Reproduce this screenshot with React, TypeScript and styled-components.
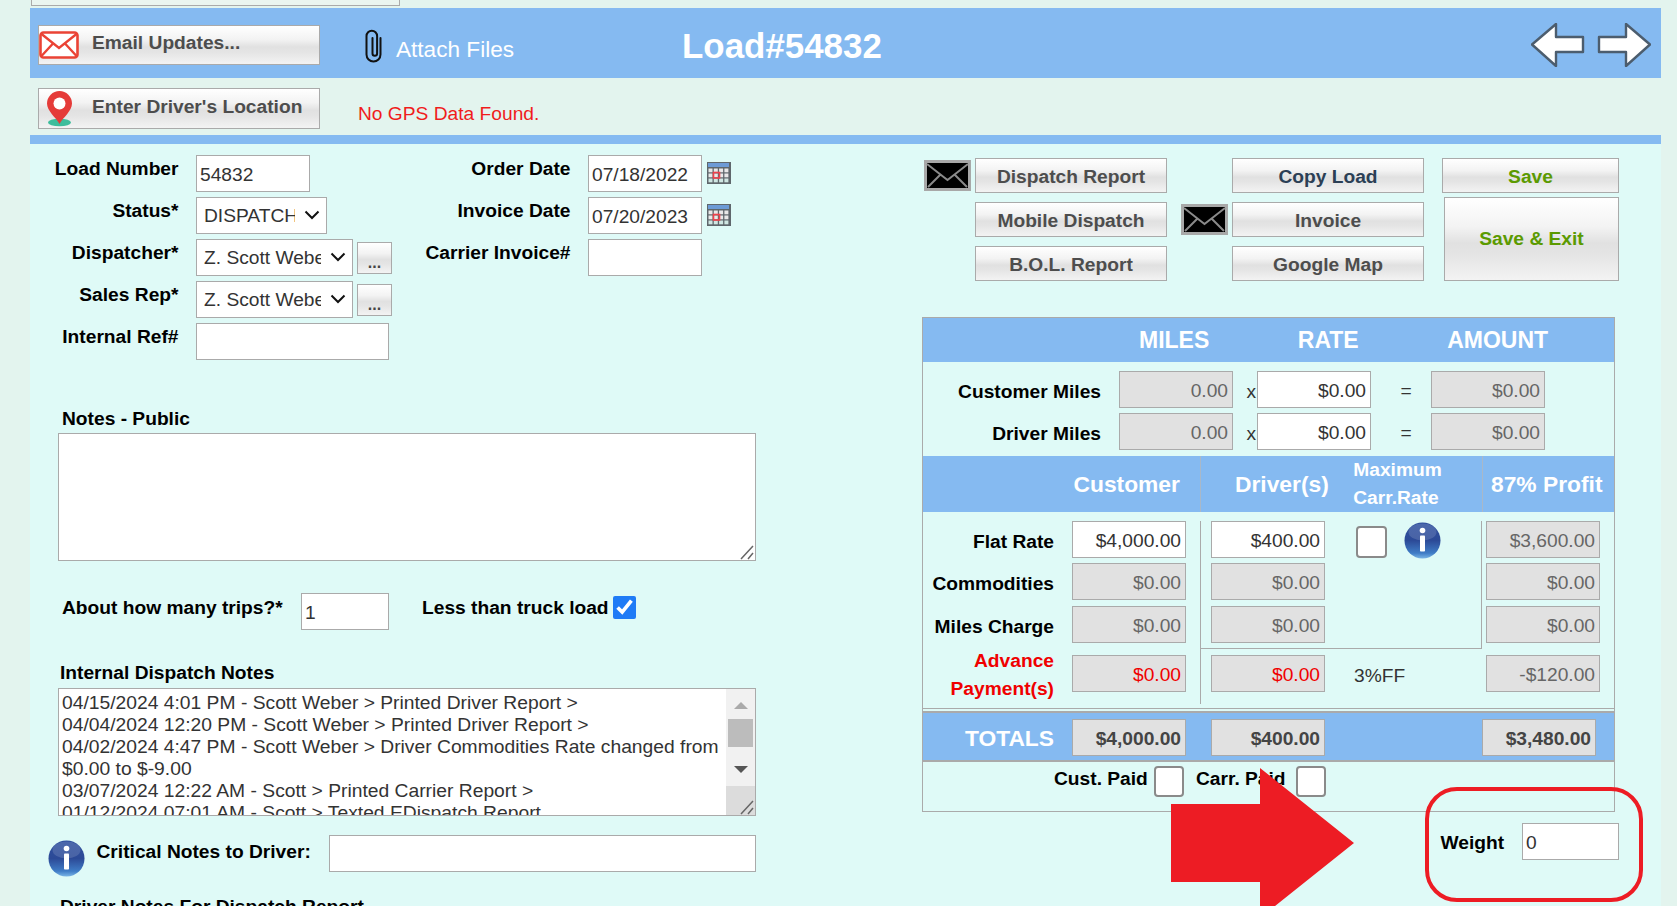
import React from "react";
import styled, { createGlobalStyle, css } from "styled-components";

const Global = createGlobalStyle`
  html, body { margin: 0; padding: 0; overflow: hidden; background: #e3f4ee; }
  * { box-sizing: border-box; }
  body, input, select, textarea, button { font-family: "Liberation Sans", Arial, sans-serif; font-size: 19.2px; }
`;

const gloss = css`
  background: linear-gradient(to bottom, #ffffff 0%, #f3f3f3 35%, #e1e1e1 55%, #e4e4e4 68%, #f3f3f3 100%);
  border: 1px solid #aaaaaa;
`;

const Page = styled.div`
  position: relative;
  width: 1677px;
  height: 906px;
  overflow: hidden;
  padding: 0 16px 0 30px;
`;
const TopStub = styled.div`
  width: 369px;
  height: 6px;
  margin: 0 0 2px 1px;
  background: #eaf5f0;
  border: 1px solid #aaaaaa;
  border-top: none;
`;
const Header = styled.header`
  display: flex;
  align-items: flex-start;
  height: 70px;
  padding: 0 9px 0 8px;
  background: #85baf1;
`;
const IconButton = styled.button`
  ${gloss}
  display: flex;
  align-items: center;
  width: 282px;
  height: ${(p: { $h: number }) => p.$h}px;
  padding: 0 0 4px 0;
  color: #4d4d4d;
  font-weight: bold;
  text-align: left;
`;
const EmailButton = styled(IconButton)`
  margin-top: 17px;
`;
const ButtonIconSlot = styled.span<{ $pad: number }>`
  display: flex;
  width: 53px;
  margin-top: 4px;
  padding-left: ${(p) => p.$pad}px;
`;
const AttachLink = styled.div`
  display: flex;
  align-items: center;
  gap: 13px;
  margin: 21px 0 0 44px;
  height: 34px;
`;
const AttachText = styled.span`
  padding-top: 8px;
  color: #ffffff;
  font-size: 22.6px;
`;
const LoadTitle = styled.h1`
  margin: 18px 0 0 168px;
  font-size: 34.9px;
  line-height: 40px;
  color: #ffffff;
  font-weight: bold;
`;
const NavArrows = styled.div`
  display: flex;
  gap: 12px;
  margin: 15px 1px 0 auto;
`;
const SubHeader = styled.div`
  display: flex;
  align-items: flex-start;
  height: 57px;
  padding: 10px 0 0 8px;
`;
const GpsMessage = styled.span`
  margin: 14px 0 0 38px;
  color: #f01c1c;
  line-height: 24px;
`;
const Divider = styled.div`
  height: 9px;
  background: #85baf1;
`;
const Body = styled.main`
  display: grid;
  grid-template-columns: 892px 739px;
  height: 762px;
  background: #dffaf7;
`;
const LeftColumn = styled.section`
  padding-top: 11px;
`;
const TopFields = styled.div`
  display: flex;
`;
const FieldColumn = styled.div`
  width: ${(p: { $w: number }) => p.$w}px;
`;
const FieldRow = styled.div`
  display: flex;
  align-items: flex-start;
  height: 42px;
`;
const FieldLabel = styled.label`
  flex: none;
  width: ${(p: { $w: number }) => p.$w}px;
  margin-right: 17.5px;
  padding-top: 1px;
  text-align: right;
  font-weight: bold;
  line-height: 26px;
  color: #000000;
`;
const Field = styled.input<{ $w: number; $right?: boolean; $off?: boolean; $red?: boolean; $bold?: boolean }>`
  flex: none;
  display: block;
  width: ${(p) => p.$w}px;
  height: 37px;
  padding: 3px 4px 0 3px;
  border: 1px solid #aaaaaa;
  border-radius: 0;
  outline: none;
  background: ${(p) => (p.$off ? "#e1e1e1" : "#ffffff")};
  color: ${(p) => (p.$red ? "#f00000" : p.$off ? "#666666" : "#333333")};
  text-align: ${(p) => (p.$right ? "right" : "left")};
  font-weight: ${(p) => (p.$bold ? "bold" : "normal")};
  ${(p) => p.$bold && "color: #444444;"}
`;
const SelectWrap = styled.div`
  position: relative;
  flex: none;
  width: ${(p: { $w: number }) => p.$w}px;
  height: 37px;
`;
const Select = styled.select`
  appearance: none;
  display: block;
  width: 100%;
  height: 100%;
  padding: 0 31px 0 7px;
  border: 1px solid #aaaaaa;
  border-radius: 0;
  background: #ffffff;
  color: #333333;
  outline: none;
`;
const Chevron = styled.svg`
  position: absolute;
  right: 7px;
  top: 13px;
  pointer-events: none;
`;
const MoreButton = styled.button`
  ${gloss}
  width: 36px;
  height: 32px;
  margin: 3px 0 0 4px;
  padding: 9px 0 0;
  font-size: 16px;
  font-weight: bold;
  color: #444444;
  line-height: 18px;
`;
const CalendarSlot = styled.span`
  display: flex;
  margin: 7px 0 0 5px;
`;
const NotesLabel = styled.div<{ $top: number; $left: number; $gap: number }>`
  margin: ${(p) => p.$top}px 0 ${(p) => p.$gap}px ${(p) => p.$left}px;
  font-weight: bold;
  line-height: 24px;
  color: #000000;
`;
const NotesWrap = styled.div`
  position: relative;
  width: 698px;
  height: 128px;
  margin-left: 28px;
`;
const NotesArea = styled.textarea`
  display: block;
  width: 100%;
  height: 100%;
  border: 1px solid #aaaaaa;
  border-radius: 0;
  background: #ffffff;
  resize: none;
  outline: none;
`;
const NotesGrip = styled.svg`
  position: absolute;
  right: 1px;
  bottom: 1px;
  pointer-events: none;
`;
const TripsRow = styled.div`
  display: flex;
  align-items: flex-start;
  height: 37px;
  margin: 32px 0 0 32px;
`;
const TripsLabel = styled.label`
  flex: none;
  width: ${(p: { $w: number }) => p.$w}px;
  margin-top: 2px;
  font-weight: bold;
  line-height: 26px;
  color: #000000;
`;
const LoadCheck = styled.input`
  flex: none;
  width: 23px;
  height: 23px;
  margin: 3px 0 0 0;
  accent-color: #1f7bf6;
`;
const LessLabel = styled(TripsLabel)`
  margin-left: 33px;
`;
const LogBox = styled.div`
  display: flex;
  width: 698px;
  height: 128px;
  margin-left: 28px;
  border: 1px solid #aaaaaa;
  background: #ffffff;
  overflow: hidden;
`;
const LogText = styled.div`
  flex: 1;
  padding: 3px 0 0 3px;
  line-height: 22px;
  color: #333333;
  font-size: 19.28px;
`;
const LogBar = styled.div`
  flex: none;
  display: flex;
  flex-direction: column;
  align-items: center;
  width: 29px;
  background: #f1f1f1;
`;
const ScrollArrow = styled.span<{ $down?: boolean }>`
  width: 0;
  height: 0;
  margin-top: ${(p) => (p.$down ? 19 : 13)}px;
  border-left: 7px solid transparent;
  border-right: 7px solid transparent;
  ${(p) => (p.$down ? "border-top: 7px solid #555555;" : "border-bottom: 7px solid #aaaaaa;")}
`;
const ScrollThumb = styled.span`
  width: 25px;
  height: 29px;
  margin-top: 10px;
  background: #bcbcbc;
`;
const ScrollCorner = styled.span`
  display: flex;
  align-items: flex-end;
  justify-content: flex-end;
  width: 100%;
  height: 30px;
  margin-top: 13px;
  background: #dcdcdc;
`;
const CriticalRow = styled.div`
  display: flex;
  align-items: flex-start;
  margin: 19px 0 0 18px;
`;
const CriticalIcon = styled.span`
  display: flex;
  margin-top: 5px;
`;
const CriticalLabel = styled.label`
  width: 232.5px;
  margin: 4px 0 0 11.5px;
  font-weight: bold;
  line-height: 26px;
  color: #000000;
`;
const RightColumn = styled.section`
  padding-top: 14px;
`;
const ActionGrid = styled.div`
  display: grid;
  grid-template-columns: 53px 192px 65px 192px 18px 177px;
  grid-template-rows: 35px 35px 35px;
  row-gap: 9px;
`;
const ActionButton = styled.button<{ $col: number; $row: number; $tone?: string }>`
  ${gloss}
  grid-column: ${(p) => p.$col};
  grid-row: ${(p) => p.$row};
  padding: 2px 0 0;
  font-weight: bold;
  color: ${(p) => p.$tone || "#4d4d4d"};
`;
const SaveExit = styled(ActionButton)`
  align-self: end;
  height: 84px;
  margin-left: 2px;
  padding: 0;
`;
const MailSlot = styled.span<{ $col: number; $row: number; $left: number }>`
  grid-column: ${(p) => p.$col};
  grid-row: ${(p) => p.$row};
  align-self: center;
  margin-left: ${(p) => p.$left}px;
  display: flex;
`;
const RateTable = styled.div`
  width: 693px;
  height: 495px;
  margin-top: 36px;
  border: 1px solid #aaaaaa;
`;
const MilesHead = styled.div`
  display: flex;
  align-items: center;
  gap: 88.5px;
  height: 44px;
  padding-left: 216px;
  background: #85baf1;
  color: #ffffff;
  font-size: 23px;
  font-weight: bold;
`;
const MilesGrid = styled.div`
  display: grid;
  grid-template-columns: 196px 114px 24px 114px 60px 114px;
  grid-auto-rows: 37px;
  row-gap: 5px;
  padding: 9px 0 6px;
`;
const MilesLabel = styled.label`
  padding: 8px 18px 0 0;
  text-align: right;
  font-weight: bold;
  line-height: 26px;
  color: #000000;
`;
const Times = styled.span`
  padding: 8px 1px 0 0;
  text-align: right;
  line-height: 26px;
  color: #333333;
`;
const EqualsSign = styled.span`
  padding: 7px 0 0 10px;
  text-align: center;
  line-height: 26px;
  color: #333333;
`;
const chargeColumns = css`
  display: grid;
  grid-template-columns: 149px 128px 282px 132px;
`;
const ChargeHead = styled.div`
  ${chargeColumns}
  height: 56px;
  background: #85baf1;
  color: #ffffff;
  font-weight: bold;
`;
const HeadCell = styled.div<{ $line?: boolean; $pad: number }>`
  display: flex;
  align-items: center;
  padding-left: ${(p) => p.$pad}px;
  font-size: 22.8px;
  ${(p) => p.$line && "border-left: 1px solid #a9b8c8;"}
`;
const MaxRate = styled.div`
  margin-left: 24.5px;
  font-size: 19.2px;
  line-height: 28px;
`;
const ChargeGrid = styled.div`
  ${chargeColumns}
  grid-template-rows: 42px 43px 43px 55px;
  padding: 9px 0 4px;
  border-bottom: 1px solid #aaaaaa;
`;
const ChargeLabel = styled.div<{ $red?: boolean }>`
  width: 131px;
  padding-top: 8px;
  text-align: right;
  font-weight: bold;
  line-height: 26px;
  color: ${(p) => (p.$red ? "#f00000" : "#000000")};
`;
const AdvanceLabel = styled(ChargeLabel)`
  margin-top: -2px;
  padding-top: 0;
  line-height: 28px;
`;
const DriverCell = styled.div<{ $right?: boolean; $bottom?: boolean; $low?: boolean }>`
  display: flex;
  align-items: flex-start;
  padding-left: 10px;
  padding-top: ${(p) => (p.$low ? 6 : 0)}px;
  border-left: 1px solid #aaaaaa;
  ${(p) => p.$right && "border-right: 1px solid #aaaaaa;"}
  ${(p) => p.$bottom && "border-bottom: 1px solid #aaaaaa;"}
`;
const CustomerCell = styled.div<{ $low?: boolean }>`
  padding-top: ${(p) => (p.$low ? 6 : 0)}px;
`;
const ProfitCell = styled(CustomerCell)`
  padding-left: 4px;
`;
const ConfirmBox = styled.input<{ $w: number; $h: number }>`
  appearance: none;
  flex: none;
  width: ${(p) => p.$w}px;
  height: ${(p) => p.$h}px;
  margin: 0;
  border: 2px solid #8a8a8a;
  border-radius: 4px;
  background: #ffffff;
`;
const MaxRateBox = styled(ConfirmBox)`
  margin: 5px 0 0 31px;
`;
const InfoSlot = styled.span`
  display: flex;
  margin: 1px 0 0 17px;
`;
const FeeNote = styled.span`
  margin: 8px 0 0 29px;
  line-height: 26px;
  color: #333333;
`;
const TotalsBand = styled.div`
  ${chargeColumns}
  height: 51px;
  margin-top: 2px;
  padding-top: 6px;
  background: #85baf1;
  border-top: 2px solid #aaaaaa;
  border-bottom: 2px solid #aaaaaa;
`;
const TotalsLabel = styled.div`
  width: 131px;
  padding-top: 6px;
  text-align: right;
  color: #ffffff;
  font-size: 22.8px;
  font-weight: bold;
  line-height: 26px;
`;
const TotalsDriver = styled.div`
  padding-left: 11px;
`;
const PaidRow = styled.div`
  display: flex;
  align-items: flex-start;
  padding: 4px 0 0 131px;
`;
const PaidLabel = styled.label<{ $w: number; $gap: number }>`
  flex: none;
  width: ${(p) => p.$w}px;
  margin-left: ${(p) => p.$gap}px;
  font-weight: bold;
  line-height: 26px;
  color: #000000;
`;
const WeightRow = styled.div`
  display: flex;
  align-items: flex-start;
  margin: 11px 0 0 518.5px;
`;
const WeightLabel = styled.label`
  width: 81.5px;
  padding-top: 7px;
  font-weight: bold;
  line-height: 26px;
  color: #000000;
`;
const Annotation = styled.svg`
  position: absolute;
  left: 0;
  top: 0;
  pointer-events: none;
`;

const MailRed = () => (
  <svg width="40" height="28" viewBox="0 0 40 28">
    <rect x="1.5" y="1.5" width="37" height="25" rx="3" fill="#fff" stroke="#ea4335" strokeWidth="2.6" />
    <path d="M2.5 3 20 17 37.5 3M2.5 25 14 12.5M37.5 25 26 12.5" fill="none" stroke="#ea4335" strokeWidth="2.4" />
  </svg>
);
const Pin = () => (
  <svg width="27" height="36" viewBox="0 0 27 36">
    <ellipse cx="13.5" cy="31.5" rx="11.5" ry="3.8" fill="#3dbd9c" />
    <path d="M13.5 33C10 26.5 1 20 1 12.5a12.5 12.5 0 0 1 25 0C26 20 17 26.5 13.5 33Z" fill="#e53b39" />
    <circle cx="13.5" cy="12.5" r="6" fill="#fff" />
  </svg>
);
const Clip = () => (
  <svg width="19" height="34" viewBox="0 0 19 34">
    <path d="M16.500 9v16.500a7 7 0 0 1-14 0V7a5.300 5.300 0 0 1 10.600 0v17.500a2.300 2.300 0 0 1-4.600 0V9" fill="none" stroke="#111" strokeWidth="2" strokeLinecap="round" />
  </svg>
);
const Calendar = () => (
  <svg width="24" height="22" viewBox="0 0 24 22">
    <rect x="0" y="0" width="24" height="22" fill="#5f676c" />
    <rect x="1" y="1" width="21" height="4" fill="#6d9bd6" />
    {[0, 1, 2].map((r) =>
      [0, 1, 2, 3].map((c) => (
        <rect key={`${r}-${c}`} x={1.500 + c * 5.300} y={6.500 + r * 5} width="4" height="3.800" fill={r === 2 ? "#cfe6e2" : "#e9e9e9"} />
      ))
    )}
    <rect x="6.500" y="10.500" width="6" height="5.500" fill="none" stroke="#f0414b" strokeWidth="1.600" />
  </svg>
);
const InfoIcon = ({ id }: { id: string }) => (
  <svg width="37" height="37" viewBox="0 0 37 37">
    <defs>
      <linearGradient id={id} x1="0" y1="0" x2="0" y2="1">
        <stop offset="0" stopColor="#2f4f9e" />
        <stop offset="0.5" stopColor="#2c4a97" />
        <stop offset="0.85" stopColor="#3f7cc6" />
        <stop offset="1" stopColor="#7ab5e6" />
      </linearGradient>
    </defs>
    <circle cx="18.500" cy="18.500" r="18" fill={`url(#${id})`} />
    <ellipse cx="18.500" cy="10" rx="14" ry="8.500" fill="#ffffff" opacity="0.14" />
    <circle cx="18.500" cy="8.500" r="2.800" fill="#fff" />
    <rect x="16" y="13.500" width="5" height="16" rx="0.800" fill="#fff" />
  </svg>
);
const MailBlack = () => (
  <svg width="47" height="31" viewBox="0 0 47 31">
    <rect width="47" height="31" fill="#a8a8a8" />
    <rect x="3" y="3" width="41" height="25" fill="#000" />
    <path d="M3 4 23.500 20 44 4M4 27 17 14M43 27 30 14" fill="none" stroke="#8a8a8a" strokeWidth="2" />
  </svg>
);
const NavArrow = ({ flip }: { flip?: boolean }) => (
  <svg width="54" height="44" viewBox="0 0 54 44" style={flip ? { transform: "scaleX(-1)" } : undefined}>
    <polygon points="1,21.500 25,1 25,14 52,14 52,29 25,29 25,43" fill="#fff" stroke="#4c5d6e" strokeWidth="2.400" strokeLinejoin="round" />
  </svg>
);
const Down = () => (
  <Chevron width="16" height="10" viewBox="0 0 16 10">
    <path d="M1.500 1.500 8 8l6.500-6.500" fill="none" stroke="#111" strokeWidth="2" />
  </Chevron>
);

const Pick = ({ w, value }: { w: number; value: string }) => (
  <SelectWrap $w={w}>
    <Select defaultValue={value}>
      <option>{value}</option>
    </Select>
    <Down />
  </SelectWrap>
);

const logLines = [
  "04/15/2024 4:01 PM - Scott Weber > Printed Driver Report >",
  "04/04/2024 12:20 PM - Scott Weber > Printed Driver Report >",
  "04/02/2024 4:47 PM - Scott Weber > Driver Commodities Rate changed from $0.00 to $-9.00",
  "03/07/2024 12:22 AM - Scott > Printed Carrier Report >",
  "01/12/2024 07:01 AM - Scott > Texted EDispatch Report",
];

export default function App() {
  return (
    <Page>
      <Global />
      <TopStub />
      <Header>
        <EmailButton $h={40}>
          <ButtonIconSlot $pad={0}><MailRed /></ButtonIconSlot>
          Email Updates...
        </EmailButton>
        <AttachLink>
          <Clip />
          <AttachText>Attach Files</AttachText>
        </AttachLink>
        <LoadTitle>Load#54832</LoadTitle>
        <NavArrows>
          <NavArrow />
          <NavArrow flip />
        </NavArrows>
      </Header>
      <SubHeader>
        <IconButton $h={41}>
          <ButtonIconSlot $pad={7}><Pin /></ButtonIconSlot>
          Enter Driver's Location
        </IconButton>
        <GpsMessage>No GPS Data Found.</GpsMessage>
      </SubHeader>
      <Divider />
      <Body>
        <LeftColumn>
          <TopFields>
            <FieldColumn $w={362}>
              <FieldRow>
                <FieldLabel $w={148.5}>Load Number</FieldLabel>
                <Field $w={114} defaultValue="54832" />
              </FieldRow>
              <FieldRow>
                <FieldLabel $w={148.5}>Status*</FieldLabel>
                <Pick w={131} value="DISPATCHED" />
              </FieldRow>
              <FieldRow>
                <FieldLabel $w={148.5}>Dispatcher*</FieldLabel>
                <Pick w={157} value="Z. Scott Weber" />
                <MoreButton>...</MoreButton>
              </FieldRow>
              <FieldRow>
                <FieldLabel $w={148.5}>Sales Rep*</FieldLabel>
                <Pick w={157} value="Z. Scott Weber" />
                <MoreButton>...</MoreButton>
              </FieldRow>
              <FieldRow>
                <FieldLabel $w={148.5}>Internal Ref#</FieldLabel>
                <Field $w={193} />
              </FieldRow>
            </FieldColumn>
            <FieldColumn $w={340}>
              <FieldRow>
                <FieldLabel $w={178.500}>Order Date</FieldLabel>
                <Field $w={114} defaultValue="07/18/2022" />
                <CalendarSlot><Calendar /></CalendarSlot>
              </FieldRow>
              <FieldRow>
                <FieldLabel $w={178.500}>Invoice Date</FieldLabel>
                <Field $w={114} defaultValue="07/20/2023" />
                <CalendarSlot><Calendar /></CalendarSlot>
              </FieldRow>
              <FieldRow>
                <FieldLabel $w={178.500}>Carrier Invoice#</FieldLabel>
                <Field $w={114} />
              </FieldRow>
            </FieldColumn>
          </TopFields>
          <NotesLabel $top={42} $left={32} $gap={2}>Notes - Public</NotesLabel>
          <NotesWrap>
            <NotesArea />
            <NotesGrip width="16" height="16" viewBox="0 0 16 16">
              <path d="M2 15 14 2M9 15l5-6" stroke="#666" strokeWidth="1.500" fill="none" />
            </NotesGrip>
          </NotesWrap>
          <TripsRow>
            <TripsLabel $w={239}>About how many trips?*</TripsLabel>
            <Field $w={88} defaultValue="1" />
            <LessLabel $w={191}>Less than truck load</LessLabel>
            <LoadCheck type="checkbox" defaultChecked />
          </TripsRow>
          <NotesLabel $top={31} $left={30} $gap={3}>Internal Dispatch Notes</NotesLabel>
          <LogBox>
            <LogText>
              {logLines.map((l) => (
                <div key={l}>{l}</div>
              ))}
            </LogText>
            <LogBar>
              <ScrollArrow />
              <ScrollThumb />
              <ScrollArrow $down />
              <ScrollCorner>
                <svg width="16" height="16" viewBox="0 0 16 16">
                  <path d="M2 15 14 2M9 15l5-6" stroke="#666" strokeWidth="1.500" fill="none" />
                </svg>
              </ScrollCorner>
            </LogBar>
          </LogBox>
          <CriticalRow>
            <CriticalIcon><InfoIcon id="infoA" /></CriticalIcon>
            <CriticalLabel>Critical Notes to Driver:</CriticalLabel>
            <Field $w={427} />
          </CriticalRow>
          <NotesLabel $top={18} $left={30} $gap={0}>Driver Notes For Dispatch Report</NotesLabel>
        </LeftColumn>
        <RightColumn>
          <ActionGrid>
            <MailSlot $col={1} $row={1} $left={2}><MailBlack /></MailSlot>
            <ActionButton $col={2} $row={1}>Dispatch Report</ActionButton>
            <ActionButton $col={4} $row={1} $tone="#2b3f55">Copy Load</ActionButton>
            <ActionButton $col={6} $row={1} $tone="#5b9a00">Save</ActionButton>
            <ActionButton $col={2} $row={2}>Mobile Dispatch</ActionButton>
            <MailSlot $col={3} $row={2} $left={14}><MailBlack /></MailSlot>
            <ActionButton $col={4} $row={2}>Invoice</ActionButton>
            <SaveExit $col={6} $row={3} $tone="#5b9a00">Save &amp; Exit</SaveExit>
            <ActionButton $col={2} $row={3}>B.O.L. Report</ActionButton>
            <ActionButton $col={4} $row={3}>Google Map</ActionButton>
          </ActionGrid>
          <RateTable>
            <MilesHead>
              <span>MILES</span>
              <span>RATE</span>
              <span>AMOUNT</span>
            </MilesHead>
            <MilesGrid>
              <MilesLabel>Customer Miles</MilesLabel>
              <Field $w={114} $right $off defaultValue="0.00" />
              <Times>x</Times>
              <Field $w={114} $right defaultValue="$0.00" />
              <EqualsSign>=</EqualsSign>
              <Field $w={114} $right $off defaultValue="$0.00" />
              <MilesLabel>Driver Miles</MilesLabel>
              <Field $w={114} $right $off defaultValue="0.00" />
              <Times>x</Times>
              <Field $w={114} $right defaultValue="$0.00" />
              <EqualsSign>=</EqualsSign>
              <Field $w={114} $right $off defaultValue="$0.00" />
            </MilesGrid>
            <ChargeHead>
              <HeadCell $pad={0} />
              <HeadCell $pad={1.500}>Customer</HeadCell>
              <HeadCell $line $pad={34}>
                Driver(s)
                <MaxRate>Maximum<br />Carr.Rate</MaxRate>
              </HeadCell>
              <HeadCell $line $pad={8}>87% Profit</HeadCell>
            </ChargeHead>
            <ChargeGrid>
              <ChargeLabel>Flat Rate</ChargeLabel>
              <CustomerCell><Field $w={114} $right defaultValue="$4,000.00" /></CustomerCell>
              <DriverCell $right>
                <Field $w={114} $right defaultValue="$400.00" />
                <MaxRateBox type="checkbox" $w={31} $h={32} />
                <InfoSlot><InfoIcon id="infoB" /></InfoSlot>
              </DriverCell>
              <ProfitCell><Field $w={114} $right $off defaultValue="$3,600.00" /></ProfitCell>

              <ChargeLabel>Commodities</ChargeLabel>
              <CustomerCell><Field $w={114} $right $off defaultValue="$0.00" /></CustomerCell>
              <DriverCell $right><Field $w={114} $right $off defaultValue="$0.00" /></DriverCell>
              <ProfitCell><Field $w={114} $right $off defaultValue="$0.00" /></ProfitCell>

              <ChargeLabel>Miles Charge</ChargeLabel>
              <CustomerCell><Field $w={114} $right $off defaultValue="$0.00" /></CustomerCell>
              <DriverCell $right $bottom><Field $w={114} $right $off defaultValue="$0.00" /></DriverCell>
              <ProfitCell><Field $w={114} $right $off defaultValue="$0.00" /></ProfitCell>

              <AdvanceLabel $red>Advance<br />Payment(s)</AdvanceLabel>
              <CustomerCell $low><Field $w={114} $right $off $red defaultValue="$0.00" /></CustomerCell>
              <DriverCell $low>
                <Field $w={114} $right $off $red defaultValue="$0.00" />
                <FeeNote>3%FF</FeeNote>
              </DriverCell>
              <ProfitCell $low><Field $w={114} $right $off defaultValue="-$120.00" /></ProfitCell>
            </ChargeGrid>
            <TotalsBand>
              <TotalsLabel>TOTALS</TotalsLabel>
              <CustomerCell><Field $w={114} $right $off $bold defaultValue="$4,000.00" /></CustomerCell>
              <TotalsDriver><Field $w={114} $right $off $bold defaultValue="$400.00" /></TotalsDriver>
              <CustomerCell><Field $w={114} $right $off $bold defaultValue="$3,480.00" /></CustomerCell>
            </TotalsBand>
            <PaidRow>
              <PaidLabel $w={100} $gap={0}>Cust. Paid</PaidLabel>
              <ConfirmBox type="checkbox" $w={30} $h={31} />
              <PaidLabel $w={100} $gap={12}>Carr. Paid</PaidLabel>
              <ConfirmBox type="checkbox" $w={30} $h={31} />
            </PaidRow>
          </RateTable>
          <WeightRow>
            <WeightLabel>Weight</WeightLabel>
            <Field $w={97} defaultValue="0" />
          </WeightRow>
        </RightColumn>
      </Body>
      <Annotation width="1677" height="906" viewBox="0 0 1677 906">
        <polygon points="1171,804 1260,804 1260,768 1354,843 1260,918 1260,882 1171,882" fill="#ed1c24" />
        <rect x="1427" y="789" width="214" height="111" rx="30" fill="none" stroke="#ed1c24" strokeWidth="4" />
      </Annotation>
    </Page>
  );
}
